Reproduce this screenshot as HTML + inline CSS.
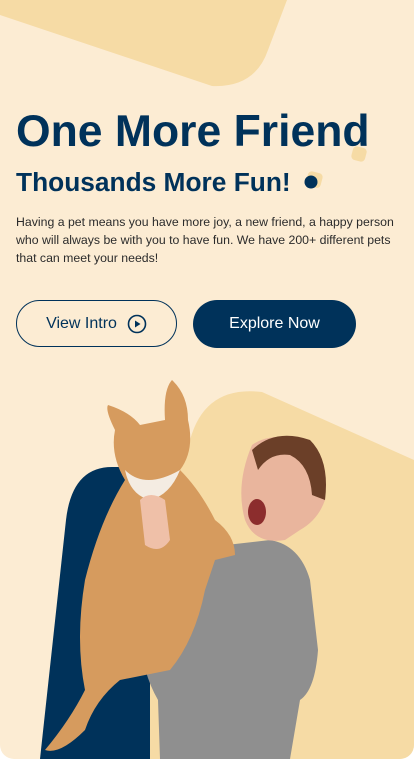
<!DOCTYPE html>
<html><head><meta charset="utf-8"><style>
html,body{margin:0;padding:0;background:#fff;}
.card{position:relative;width:414px;height:759px;background:#fcecd3;border-radius:0 0 14px 14px;overflow:hidden;font-family:"Liberation Sans",sans-serif;color:#00325a;}
svg.bg{position:absolute;left:0;top:0;}
h1{position:absolute;left:16px;top:107px;margin:0;font-size:44.5px;font-weight:700;letter-spacing:0px;white-space:nowrap;}
h2{position:absolute;left:16px;top:167px;margin:0;font-size:26.3px;font-weight:700;letter-spacing:0px;white-space:nowrap;}
p{position:absolute;left:16px;top:213px;margin:0;width:398px;font-size:12.3px;line-height:18px;color:#2b2b2b;letter-spacing:0px;}
.b1{position:absolute;left:16px;top:300px;width:161px;height:47px;border:1.5px solid #00325a;border-radius:24px;box-sizing:border-box;font-size:16px;display:flex;align-items:center;justify-content:center;gap:10px;}
.b2{position:absolute;left:193px;top:300px;width:163px;height:48px;background:#00325a;color:#fff;border-radius:24px;font-size:16px;display:flex;align-items:center;justify-content:center;}
</style></head><body><div class="card">
<svg class="bg" width="414" height="759" viewBox="0 0 414 759">
<path d="M0,0 L287,0 L268,50 Q255,88 212,86 L0,15 Z" fill="#f6dba5"/>
<path d="M190,440 Q205,385 262,392 L414,460 L414,759 L40,759 Z" fill="#f6dba5"/>
<path d="M40,759 L66,520 Q72,467 112,467 L150,467 L150,759 Z" fill="#00325a"/>
<rect x="352" y="147" width="14" height="14" rx="4" fill="#f6dba5" transform="rotate(15 359 154)"/>
<rect x="307" y="172" width="15" height="15" rx="4" fill="#f6dba5" transform="rotate(15 314 179)"/>
<circle cx="311" cy="182" r="6.5" fill="#00325a"/>
<path d="M140,600 Q150,555 200,548 L270,540 Q300,545 310,580 L318,650 Q315,690 300,700 L290,759 L160,759 L158,700 Q135,660 140,600 Z" fill="#8f8f8f"/>
<path d="M252,445 Q270,432 300,440 Q328,455 325,500 Q318,520 300,530 L285,540 Q255,545 245,520 Q235,485 252,445 Z" fill="#e9b59d"/>
<path d="M252,450 Q275,428 310,440 Q330,460 325,500 L312,495 Q310,465 290,455 Q270,452 258,470 Z" fill="#6b3f28"/>
<ellipse cx="257" cy="512" rx="9" ry="13" fill="#8c2d2d"/>
<path d="M115,430 Q105,410 108,405 Q130,412 140,425 L165,420 Q163,390 172,380 Q188,395 188,420 Q195,450 180,470 Q200,490 215,520 Q235,535 235,555 L215,560 L205,590 Q195,640 170,670 L120,680 Q95,700 85,730 Q60,755 45,750 Q70,720 85,690 Q75,640 85,580 Q100,520 125,480 Q110,455 115,430 Z" fill="#d69b5e"/>
<path d="M125,470 Q145,490 180,470 Q170,495 150,500 Q130,495 125,470 Z" fill="#f4ece2"/>
<path d="M140,500 Q150,490 165,500 L170,540 Q160,555 145,545 Z" fill="#efc0a8"/>
</svg>
<h1>One More Friend</h1>
<h2>Thousands More Fun!</h2>
<p>Having a pet means you have more joy, a new friend, a happy person who will always be with you to have fun. We have 200+ different pets that can meet your needs!</p>
<div class="b1">View Intro <svg width="20" height="20" viewBox="0 0 20 20"><circle cx="10" cy="10" r="8.5" fill="none" stroke="#00325a" stroke-width="1.6"/><path d="M8,6.5 L13.5,10 L8,13.5 Z" fill="#00325a"/></svg></div>
<div class="b2">Explore Now</div>
</div></body></html>
